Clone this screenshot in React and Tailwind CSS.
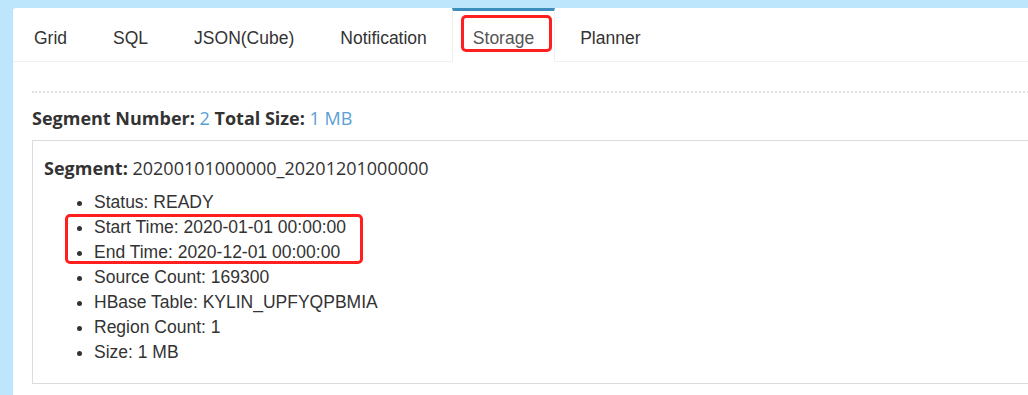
import React from 'react';

const tabs = ['Grid', 'SQL', 'JSON(Cube)', 'Notification', 'Storage', 'Planner'];

const details = [
  'Status: READY',
  'Start Time: 2020-01-01 00:00:00',
  'End Time: 2020-12-01 00:00:00',
  'Source Count: 169300',
  'HBase Table: KYLIN_UPFYQPBMIA',
  'Region Count: 1',
  'Size: 1 MB',
];

export default function App() {
  return (
    <div className="h-[395px] w-[1028px] overflow-hidden bg-[#bde6fc] pl-[13px] pt-[8px]">
      <div className="h-[400px] w-[1100px] rounded-tl-[3px] bg-white">
        {/* Tabs */}
        <div className="flex h-[54px] border-b border-[#f0f0f0] font-['Liberation_Sans',Arial,sans-serif] text-[17.5px] text-[#333]">
          {tabs.map((t) => {
            const active = t === 'Storage';
            return (
              <div
                key={t}
                className={
                  active
                    ? 'relative mr-[4px] -mb-px flex items-center border-x border-t-[3px] border-x-[#f0f0f0] border-t-[#3c8dbc] bg-white px-5 pt-[4px] text-[#555]'
                    : 'mr-[4px] flex items-center border-x border-transparent px-5 pt-[7px]'
                }
              >
                {t}
                {active && (
                  <div className="absolute left-[8px] top-[4px] h-[37px] w-[91px] rounded-[5px] border-[3px] border-[#ff1f1f]" />
                )}
              </div>
            );
          })}
        </div>

        {/* Content */}
        <div className="pl-[19px] pt-[29px]">
          <div className="border-t-2 border-dotted border-[#e0e0e0]" />
          <div className="mt-[12px] h-[26px] font-['Open_Sans',sans-serif] text-[18px] leading-[26px] text-[#333]">
            <span className="font-bold">Segment Number:</span>{' '}
            <span className="text-[#5a9fd4]">2</span>{' '}
            <span className="font-bold">Total Size:</span>{' '}
            <span className="text-[#5a9fd4]">1 MB</span>
          </div>

          <div className="relative mt-[9px] h-[244px] border border-[#dcdcdc] pl-[11px] pt-[14px]">
            <div className="h-[26px] font-['Open_Sans',sans-serif] text-[18px] leading-[26px] text-[#333]">
              <span className="font-bold">Segment:</span> 20200101000000_20201201000000
            </div>
            <ul className="mt-[9px] list-disc pl-[50px] font-['Liberation_Sans',Arial,sans-serif] text-[17.5px] leading-[25px] text-[#333]">
              {details.map((d) => (
                <li key={d}>{d}</li>
              ))}
            </ul>
            <div className="absolute left-[32px] top-[73px] h-[50px] w-[298px] rounded-[5px] border-[3px] border-[#ff1f1f]" />
          </div>
        </div>
      </div>
    </div>
  );
}
